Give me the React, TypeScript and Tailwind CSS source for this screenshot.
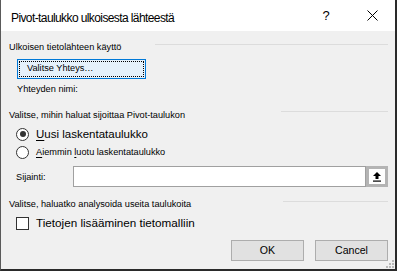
import React from "react";

function Radio({ checked }: { checked?: boolean }) {
  return (
    <div className="w-[13px] h-[13px] rounded-full border border-[#333] bg-white flex items-center justify-center shrink-0">
      {checked && <div className="w-[6px] h-[6px] rounded-full bg-[#333]" />}
    </div>
  );
}

export default function App() {
  return (
    <div className="w-[397px] h-[271px] relative bg-[#f0f0f0] border-l border-l-[#5a5a5a] border-r-2 border-r-[#2a2a2a] border-b-2 border-b-[#2a2a2a] flex flex-col overflow-hidden font-['Liberation_Sans',Arial,sans-serif] text-black">
      {/* Title bar */}
      <div className="h-[31px] bg-white flex items-start shrink-0">
        <div className="pl-[10px] pt-[11px] text-[12px] leading-[14px] tracking-[-0.6px] whitespace-nowrap">
          Pivot-taulukko ulkoisesta lähteestä
        </div>
        <div className="ml-auto flex h-full">
          <div className="w-[46px] h-full flex items-center justify-center text-[13px] leading-none">?</div>
          <div className="w-[46px] h-full flex items-center justify-center">
            <svg width="11" height="11" viewBox="0 0 11 11">
              <path d="M0.5 0.5 L10.5 10.5 M10.5 0.5 L0.5 10.5" stroke="#000" strokeWidth="1" />
            </svg>
          </div>
        </div>
      </div>

      {/* Body */}
      <div className="flex flex-col pl-[8px] pr-[7px]">
        <div className="mt-[9px] h-[14px] flex items-start">
          <span className="text-[9.2px] leading-[14px] whitespace-nowrap">Ulkoisen tietolähteen käyttö</span>
          <div className="ml-auto w-[233px] h-px bg-[#dcdcdc] mt-[4px]" />
        </div>

        <div className="mt-[5px] ml-[8px] w-[129px] h-[20px] border border-[#0078d7] bg-[#e5f1fb] p-px">
          <div className="w-full h-full border border-dotted border-black flex items-center pl-[7px] text-[9.2px] leading-none whitespace-nowrap">
            Valitse Yhteys…
          </div>
        </div>

        <div className="mt-[3px] ml-[8px] h-[14px] text-[9.2px] leading-[14px] whitespace-nowrap">Yhteyden nimi:</div>

        <div className="mt-[12px] h-[14px] flex items-start">
          <span className="text-[9.2px] leading-[14px] whitespace-nowrap">Valitse, mihin haluat sijoittaa Pivot-taulukon</span>
          <div className="ml-auto w-[107px] h-px bg-[#dcdcdc] mt-[3px]" />
        </div>

        <div className="mt-[5px] h-[14px] flex items-center pl-[7px]">
          <Radio checked />
          <span className="ml-[7px] text-[11.5px] leading-[14px] whitespace-nowrap">
            <span className="underline underline-offset-2">U</span>usi laskentataulukko
          </span>
        </div>

        <div className="mt-[4px] h-[14px] flex items-center pl-[7px]">
          <Radio />
          <span className="ml-[7px] text-[9.2px] leading-[14px] whitespace-nowrap">
            <span className="underline underline-offset-2">A</span>iemmin <span className="underline underline-offset-2">l</span>uotu laskentataulukko
          </span>
        </div>

        <div className="mt-[7px] h-[21px] flex items-center pl-[7px]">
          <span className="w-[57px] shrink-0 text-[9.2px] leading-[14px] whitespace-nowrap">Sijainti:</span>
          <div className="flex-1 h-full border border-[#a0a0a0] bg-white" />
          <div className="w-[22px] h-full border-[3px] border-[#b4b4b4] bg-white flex items-center justify-center shrink-0">
            <svg width="10" height="11" viewBox="0 0 10 11">
              <path d="M5 1 L9 5 L6.5 5 L6.5 8 L3.5 8 L3.5 5 L1 5 Z" fill="#000" />
              <rect x="1" y="9.5" width="8" height="1.2" fill="#000" />
            </svg>
          </div>
        </div>

        <div className="mt-[10px] h-[14px] flex items-start">
          <span className="text-[9.2px] leading-[14px] whitespace-nowrap">Valitse, haluatko analysoida useita taulukoita</span>
          <div className="ml-auto w-[105px] h-px bg-[#dcdcdc] mt-[4px]" />
        </div>

        <div className="mt-[5px] h-[14px] flex items-center pl-[7px]">
          <div className="w-[13px] h-[13px] border border-[#333] bg-white shrink-0" />
          <span className="ml-[7px] text-[11.7px] leading-[14px] whitespace-nowrap">Tietojen lisääminen tietomalliin</span>
        </div>

        <div className="mt-[10px] flex justify-end gap-[11px]">
          <div className="w-[73px] h-[21px] border border-[#adadad] bg-[#e1e1e1] flex items-center justify-center text-[10.6px] leading-none">OK</div>
          <div className="w-[73px] h-[21px] border border-[#adadad] bg-[#e1e1e1] flex items-center justify-center text-[10.6px] leading-none">Cancel</div>
        </div>
      </div>

      {/* Resize grip */}
      <svg className="absolute right-[1px] bottom-[1px]" width="8" height="8" viewBox="0 0 8 8">
        <rect x="6" y="0" width="2" height="2" fill="#b8b8b8" />
        <rect x="3" y="3" width="2" height="2" fill="#b8b8b8" />
        <rect x="6" y="3" width="2" height="2" fill="#b8b8b8" />
        <rect x="0" y="6" width="2" height="2" fill="#b8b8b8" />
        <rect x="3" y="6" width="2" height="2" fill="#b8b8b8" />
        <rect x="6" y="6" width="2" height="2" fill="#b8b8b8" />
      </svg>
    </div>
  );
}
